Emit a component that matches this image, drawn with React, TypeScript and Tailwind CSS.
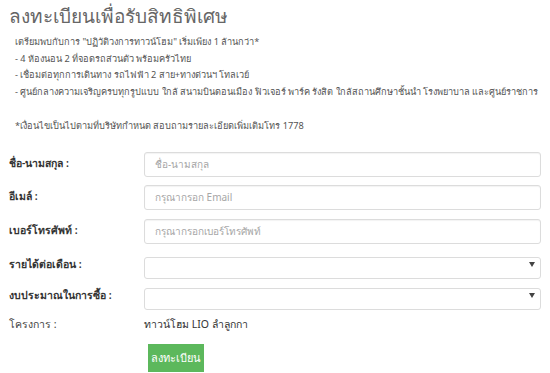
import React from 'react';

const perks = [
  'เตรียมพบกับการ "ปฏิวัติวงการทาวน์โฮม" เริ่มเพียง 1 ล้านกว่า*',
  '- 4 ห้องนอน 2 ที่จอดรถส่วนตัว พร้อมครัวไทย',
  '- เชื่อมต่อทุกการเดินทาง รถไฟฟ้า 2 สาย+ทางด่วนฯ โทลเวย์',
  '- ศูนย์กลางความเจริญครบทุกรูปแบบ ใกล้ สนามบินดอนเมือง ฟิวเจอร์ พาร์ค รังสิต ใกล้สถานศึกษาชั้นนำ โรงพยาบาล และศูนย์ราชการ',
];

const Label = ({ children, bold = true }: { children: React.ReactNode; bold?: boolean }) => (
  <div className={`w-[135px] shrink-0 text-[10.5px] ${bold ? 'font-semibold text-[#333]' : 'text-[#444]'}`}>{children}</div>
);

const TextField = ({ placeholder }: { placeholder: string }) => (
  <input
    type="text"
    placeholder={placeholder}
    className="h-[25px] flex-1 rounded-[3px] border border-[#dcdcdc] bg-white px-[10px] text-[10px] text-[#555] placeholder-[#a6a6a6] shadow-[inset_0_1px_1px_rgba(0,0,0,0.05)] outline-none"
  />
);

const SelectField = () => (
  <div className="relative h-[22px] flex-1">
    <select className="h-full w-full appearance-none rounded-[3px] border border-[#dcdcdc] bg-white px-[10px] text-[10px] outline-none">
      <option></option>
    </select>
    <span className="pointer-events-none absolute right-[6px] top-[8px] h-0 w-0 border-x-[3px] border-t-[5px] border-x-transparent border-t-[#444]" />
  </div>
);

export default function App() {
  return (
    <div className="h-[373px] w-[550px] bg-white pl-[9px] pr-[9px] pt-[2px] font-['Noto_Sans','Liberation_Sans',sans-serif]">
      <h1 className="text-[19px] font-light leading-[28px] text-[#666]">ลงทะเบียนเพื่อรับสิทธิพิเศษ</h1>

      <div className="mt-[4px] pl-[6px] text-[9.2px] leading-[16.5px] text-[#555]">
        {perks.map((line) => (
          <p key={line} className="whitespace-nowrap">{line}</p>
        ))}
        <p className="mt-[18px]">*เงื่อนไขเป็นไปตามที่บริษัทกำหนด สอบถามรายละเอียดเพิ่มเติมโทร 1778</p>
      </div>

      <form className="mt-[17px] flex flex-col" onSubmit={(e) => e.preventDefault()}>
        <div className="flex items-center">
          <Label>ชื่อ-นามสกุล :</Label>
          <TextField placeholder="ชื่อ-นามสกุล" />
        </div>
        <div className="mt-[8px] flex items-center">
          <Label>อีเมล์ :</Label>
          <TextField placeholder="กรุณากรอก Email" />
        </div>
        <div className="mt-[9px] flex items-center">
          <Label>เบอร์โทรศัพท์ :</Label>
          <TextField placeholder="กรุณากรอกเบอร์โทรศัพท์" />
        </div>
        <div className="mt-[10px] flex items-center">
          <Label>รายได้ต่อเดือน :</Label>
          <SelectField />
        </div>
        <div className="mt-[9px] flex items-center">
          <Label>งบประมาณในการซื้อ :</Label>
          <SelectField />
        </div>
        <div className="mt-[9px] flex h-[18px] items-center">
          <Label bold={false}>โครงการ :</Label>
          <span className="text-[10.5px] text-[#333]">ทาวน์โฮม LIO ลำลูกกา</span>
        </div>
        <div className="mt-[10px] pl-[139px]">
          <button type="submit" className="h-[28px] w-[56px] bg-[#5cb85c] text-[11px] text-white">
            ลงทะเบียน
          </button>
        </div>
      </form>
    </div>
  );
}
